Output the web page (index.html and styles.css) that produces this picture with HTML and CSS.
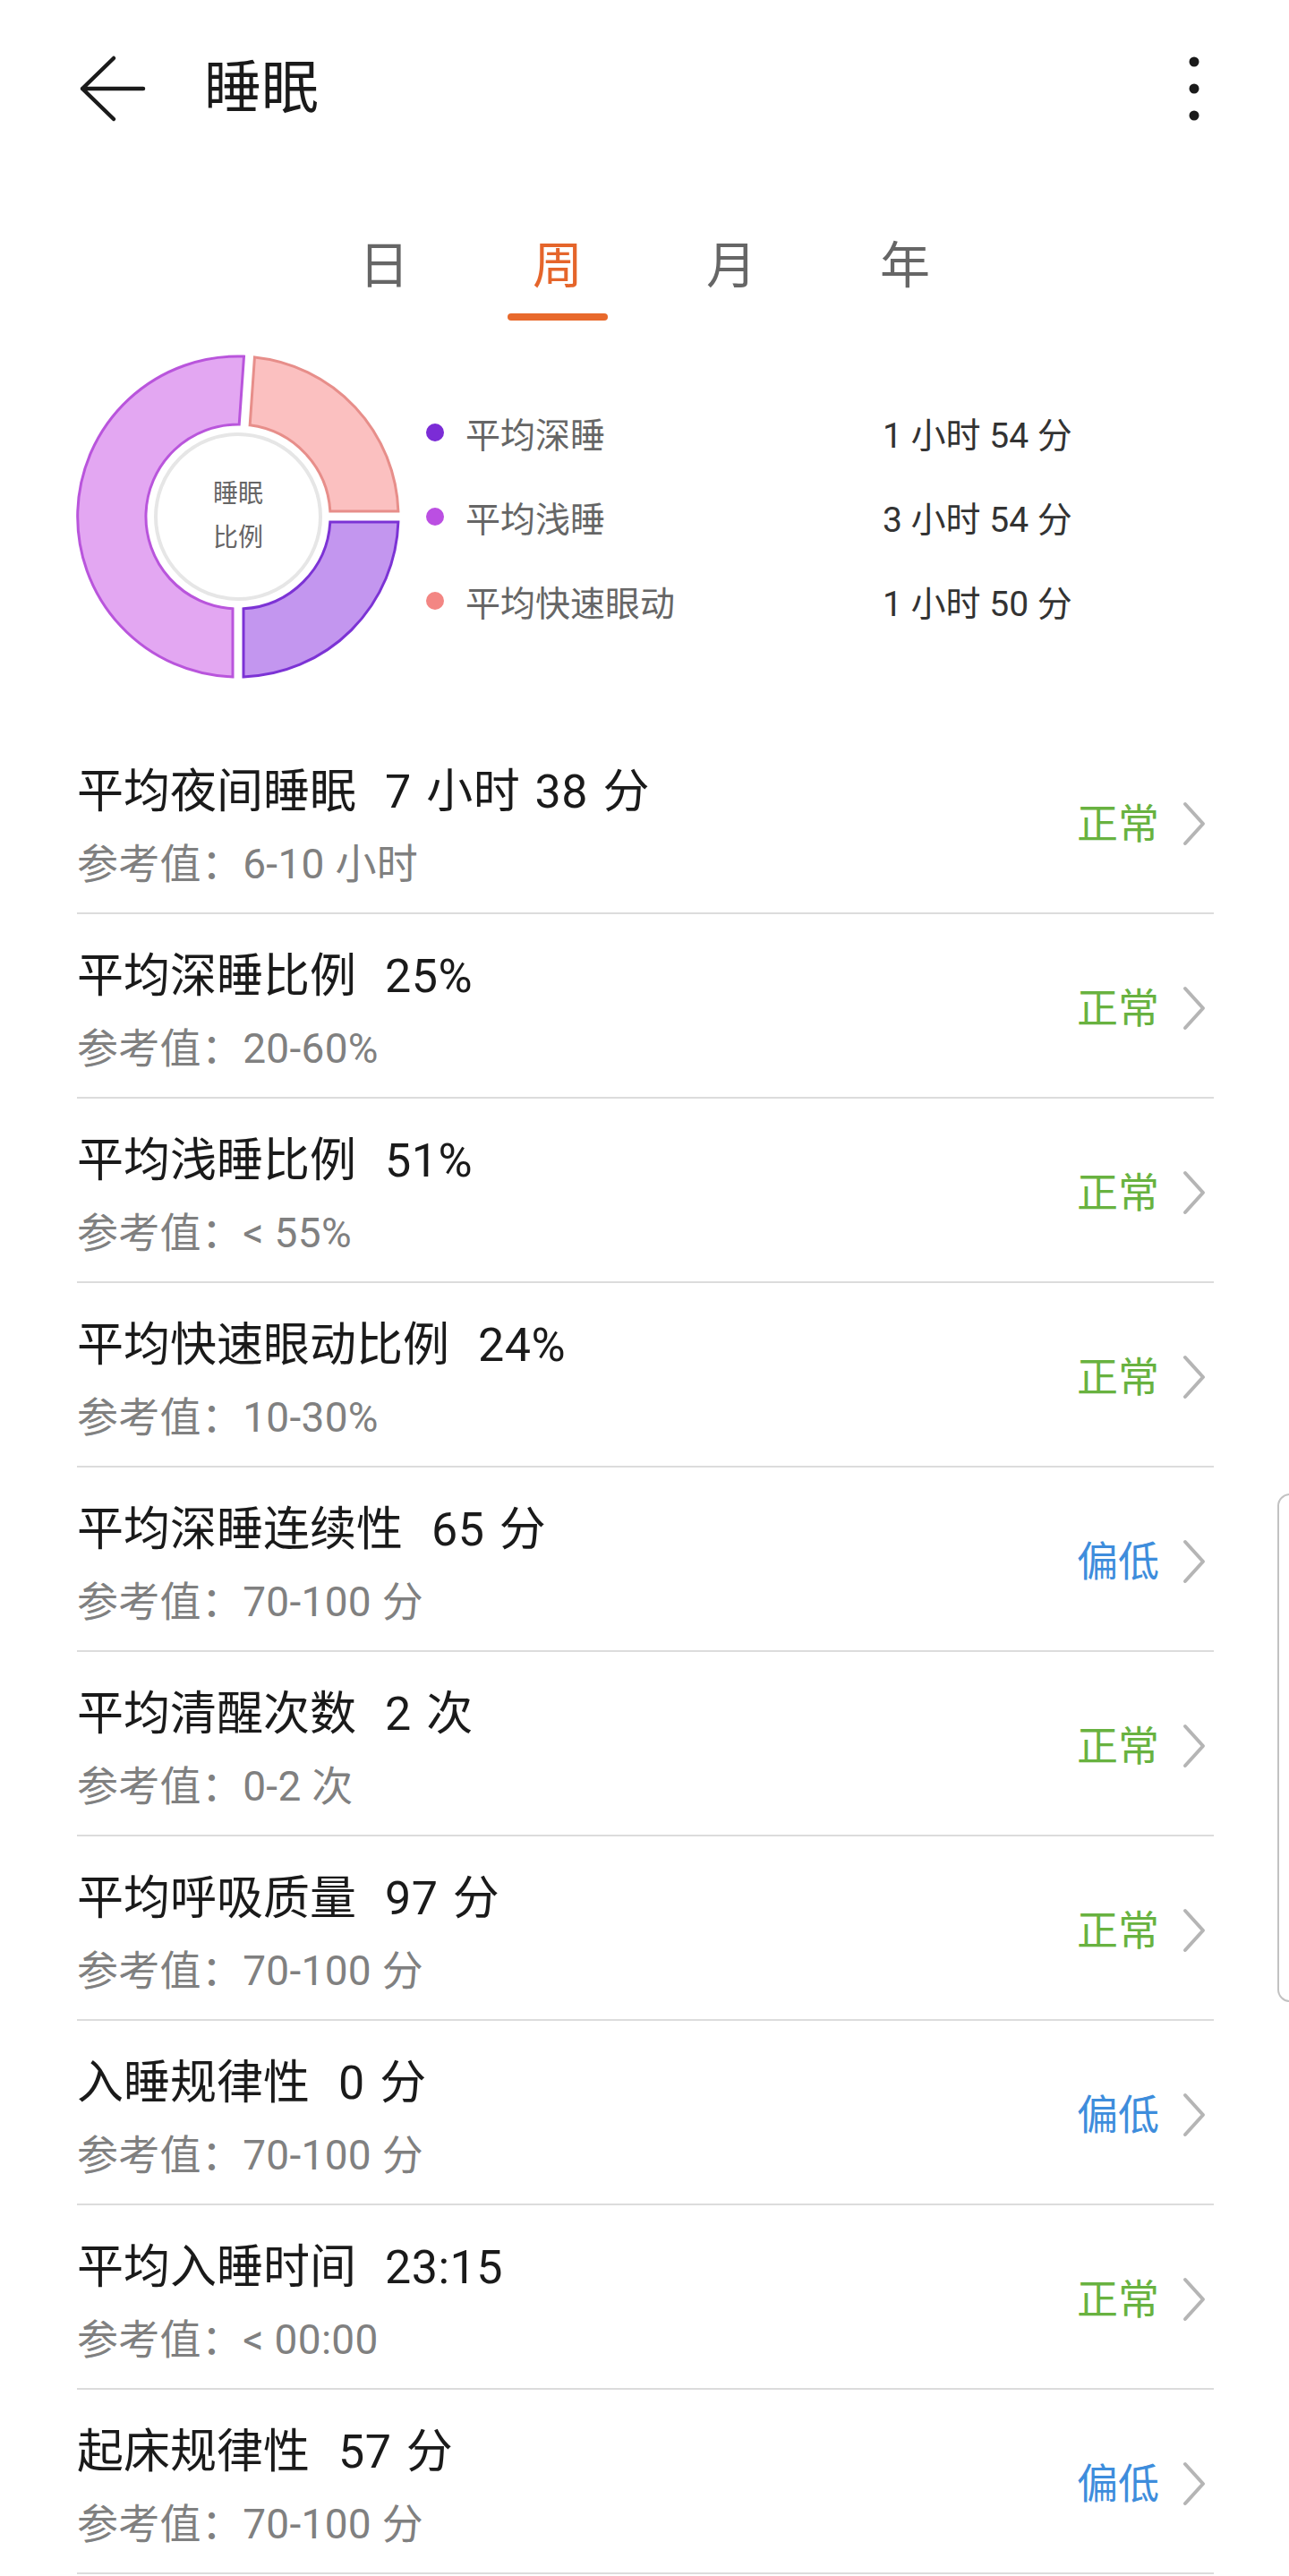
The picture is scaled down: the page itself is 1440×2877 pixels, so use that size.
FILE: index.html
```html
<!DOCTYPE html>
<html lang="zh-CN">
<head>
	<meta charset="UTF-8">
	<title>睡眠</title>
	<link rel="stylesheet" href="styles.css">
</head>
<body>
	<div class="page">
		<div class="header">
			<svg class="back" width="76" height="76" viewBox="0 0 76 76"><path d="M72 38H4M39 4L4 38L39 72" fill="none" stroke="#1a1a1a" stroke-width="4.5" stroke-linecap="round" stroke-linejoin="round"/></svg>
			<h1 class="title">睡眠</h1>
			<svg class="more" width="20" height="80" viewBox="0 0 20 80"><circle cx="10" cy="10" r="5.5" fill="#1a1a1a"/><circle cx="10" cy="40" r="5.5" fill="#1a1a1a"/><circle cx="10" cy="70" r="5.5" fill="#1a1a1a"/></svg>
		</div>
		<div class="tabs">
			<div class="tab">日</div>
			<div class="tab tab-on">周</div>
			<div class="tab">月</div>
			<div class="tab">年</div>
		</div>
		<div class="summary">
			<svg class="ring" width="370" height="370" viewBox="0 0 370 370">
				<path class="seg-rem" d="M203.46,6.95 A179,179 0 0 1 363.9,179 L287.83,179 A103,103 0 0 0 198.16,82.84 Z"/>
				<path class="seg-deep" d="M363.9,191 A179,179 0 0 1 191,363.9 L191,287.83 A103,103 0 0 0 287.83,191 Z"/>
				<path class="seg-light" d="M179,363.9 A179,179 0 1 1 191.5,6.12 L186.19,82.01 A103,103 0 0 0 179,287.83 Z"/>
				<circle cx="185" cy="185" r="92" fill="#fff" stroke="#e6e6e6" stroke-width="4"/>
				<text class="ring-txt" x="185" y="169">睡眠</text>
				<text class="ring-txt" x="185" y="218">比例</text>
			</svg>
			<ul class="legend">
				<li><span class="dot dot-deep"></span><span class="legend-name">平均深睡</span><span class="legend-val">1 小时 54 分</span></li>
				<li><span class="dot dot-light"></span><span class="legend-name">平均浅睡</span><span class="legend-val">3 小时 54 分</span></li>
				<li><span class="dot dot-rem"></span><span class="legend-name">平均快速眼动</span><span class="legend-val">1 小时 50 分</span></li>
			</ul>
		</div>
		<div class="list">
			<div class="item">
				<div class="item-text">
					<p class="item-title">平均夜间睡眠<span class="item-val">7 小时 38 分</span></p>
					<p class="item-ref">参考值<span class="colon">：</span>6-10 小时</p>
				</div>
				<span class="status status-ok">正常</span>
				<svg class="chevron" width="26" height="50" viewBox="0 0 26 50"><polyline points="3,3 23,25 3,47" fill="none" stroke="#b5b5b5" stroke-width="4" stroke-linecap="round" stroke-linejoin="round"/></svg>
			</div>
			<div class="item">
				<div class="item-text">
					<p class="item-title">平均深睡比例<span class="item-val">25%</span></p>
					<p class="item-ref">参考值<span class="colon">：</span>20-60%</p>
				</div>
				<span class="status status-ok">正常</span>
				<svg class="chevron" width="26" height="50" viewBox="0 0 26 50"><polyline points="3,3 23,25 3,47" fill="none" stroke="#b5b5b5" stroke-width="4" stroke-linecap="round" stroke-linejoin="round"/></svg>
			</div>
			<div class="item">
				<div class="item-text">
					<p class="item-title">平均浅睡比例<span class="item-val">51%</span></p>
					<p class="item-ref">参考值<span class="colon">：</span>&lt; 55%</p>
				</div>
				<span class="status status-ok">正常</span>
				<svg class="chevron" width="26" height="50" viewBox="0 0 26 50"><polyline points="3,3 23,25 3,47" fill="none" stroke="#b5b5b5" stroke-width="4" stroke-linecap="round" stroke-linejoin="round"/></svg>
			</div>
			<div class="item">
				<div class="item-text">
					<p class="item-title">平均快速眼动比例<span class="item-val">24%</span></p>
					<p class="item-ref">参考值<span class="colon">：</span>10-30%</p>
				</div>
				<span class="status status-ok">正常</span>
				<svg class="chevron" width="26" height="50" viewBox="0 0 26 50"><polyline points="3,3 23,25 3,47" fill="none" stroke="#b5b5b5" stroke-width="4" stroke-linecap="round" stroke-linejoin="round"/></svg>
			</div>
			<div class="item">
				<div class="item-text">
					<p class="item-title">平均深睡连续性<span class="item-val">65 分</span></p>
					<p class="item-ref">参考值<span class="colon">：</span>70-100 分</p>
				</div>
				<span class="status status-low">偏低</span>
				<svg class="chevron" width="26" height="50" viewBox="0 0 26 50"><polyline points="3,3 23,25 3,47" fill="none" stroke="#b5b5b5" stroke-width="4" stroke-linecap="round" stroke-linejoin="round"/></svg>
			</div>
			<div class="item">
				<div class="item-text">
					<p class="item-title">平均清醒次数<span class="item-val">2 次</span></p>
					<p class="item-ref">参考值<span class="colon">：</span>0-2 次</p>
				</div>
				<span class="status status-ok">正常</span>
				<svg class="chevron" width="26" height="50" viewBox="0 0 26 50"><polyline points="3,3 23,25 3,47" fill="none" stroke="#b5b5b5" stroke-width="4" stroke-linecap="round" stroke-linejoin="round"/></svg>
			</div>
			<div class="item">
				<div class="item-text">
					<p class="item-title">平均呼吸质量<span class="item-val">97 分</span></p>
					<p class="item-ref">参考值<span class="colon">：</span>70-100 分</p>
				</div>
				<span class="status status-ok">正常</span>
				<svg class="chevron" width="26" height="50" viewBox="0 0 26 50"><polyline points="3,3 23,25 3,47" fill="none" stroke="#b5b5b5" stroke-width="4" stroke-linecap="round" stroke-linejoin="round"/></svg>
			</div>
			<div class="item">
				<div class="item-text">
					<p class="item-title">入睡规律性<span class="item-val">0 分</span></p>
					<p class="item-ref">参考值<span class="colon">：</span>70-100 分</p>
				</div>
				<span class="status status-low">偏低</span>
				<svg class="chevron" width="26" height="50" viewBox="0 0 26 50"><polyline points="3,3 23,25 3,47" fill="none" stroke="#b5b5b5" stroke-width="4" stroke-linecap="round" stroke-linejoin="round"/></svg>
			</div>
			<div class="item">
				<div class="item-text">
					<p class="item-title">平均入睡时间<span class="item-val">23:15</span></p>
					<p class="item-ref">参考值<span class="colon">：</span>&lt; 00:00</p>
				</div>
				<span class="status status-ok">正常</span>
				<svg class="chevron" width="26" height="50" viewBox="0 0 26 50"><polyline points="3,3 23,25 3,47" fill="none" stroke="#b5b5b5" stroke-width="4" stroke-linecap="round" stroke-linejoin="round"/></svg>
			</div>
			<div class="item">
				<div class="item-text">
					<p class="item-title">起床规律性<span class="item-val">57 分</span></p>
					<p class="item-ref">参考值<span class="colon">：</span>70-100 分</p>
				</div>
				<span class="status status-low">偏低</span>
				<svg class="chevron" width="26" height="50" viewBox="0 0 26 50"><polyline points="3,3 23,25 3,47" fill="none" stroke="#b5b5b5" stroke-width="4" stroke-linecap="round" stroke-linejoin="round"/></svg>
			</div>
		</div>
		<div class="edge"></div>
	</div>
</body>
</html>
```

FILE: styles.css
```css
*{margin: 0;padding: 0;box-sizing: border-box;}
body{
	background-color: #fff;
	font-family: Roboto, "Noto Sans CJK SC", sans-serif;
	color: #1a1a1a;
}
.page{
	position: relative;
	width: 1440px;
	height: 2877px;
	overflow: hidden;
}
/*顶部栏*/
.header{
	display: flex;
	align-items: center;
	height: 198px;
	padding-left: 88px;
}
.header .title{
	margin-left: 64px;
	font-size: 64px;
	font-weight: 400;
	line-height: 80px;
}
.header .more{
	margin-left: auto;
	margin-right: 96px;
}
/*日周月年*/
.tabs{
	display: flex;
	justify-content: center;
	align-items: flex-start;
	padding-top: 64px;
}
.tab{
	display: flex;
	flex-direction: column;
	align-items: center;
	width: 194px;
	font-size: 56px;
	line-height: 70px;
	color: #666;
}
.tab-on{
	color: #e5652b;
}
.tab-on::after{
	content: "";
	width: 112px;
	height: 8px;
	margin-top: 18px;
	border-radius: 4px;
	background-color: #e8692c;
}
/*睡眠比例*/
.summary{
	display: flex;
	align-items: center;
	margin-top: 34px;
	padding-left: 81px;
}
.ring .seg-rem{fill: #fbc0c0;stroke: #e78e8a;stroke-width: 3;}
.ring .seg-deep{fill: #c396ef;stroke: #7c33d5;stroke-width: 3;}
.ring .seg-light{fill: #e3a7f2;stroke: #b955dc;stroke-width: 3;}
.ring-txt{
	font-size: 28px;
	fill: #666;
	text-anchor: middle;
	font-family: "Noto Sans CJK SC", sans-serif;
}
.legend{
	list-style: none;
	margin-left: 25px;
}
.legend li{
	display: flex;
	align-items: center;
	height: 94px;
	font-size: 39px;
}
.dot{
	width: 20px;
	height: 20px;
	border-radius: 50%;
	margin-right: 24px;
}
.dot-deep{background-color: #7b2cd6;}
.dot-light{background-color: #bb4fe2;}
.dot-rem{background-color: #f38683;}
.legend-name{
	width: 466px;
	color: #666;
}
.legend-val{
	color: #333;
}
/*指标列表*/
.list{
	margin: 53px 84px 0 86px;
}
.item{
	display: flex;
	align-items: center;
	height: 206px;
	padding-top: 6px;
	padding-right: 9px;
	border-bottom: 2px solid #dcdcdc;
}
.item-text{
	flex: 1;
	padding-top: 6px;
}
.item-title{
	font-size: 52px;
	line-height: 80px;
	color: #1a1a1a;
}
.item-val{
	margin-left: 32px;
	word-spacing: 3px;
	letter-spacing: 0.5px;
}
.item-ref{
	font-size: 46px;
	line-height: 72px;
	color: #808080;
	letter-spacing: 0.3px;
}
.item-ref .colon{
	font-family: "Noto Sans CJK JP", sans-serif;
}
.status{
	font-size: 46px;
	line-height: 60px;
	margin-right: 26px;
}
.status-ok{color: #68b240;}
.status-low{color: #3e8ddc;}
/*右侧边缘把手*/
.edge{
	position: absolute;
	left: 1427px;
	top: 1668px;
	width: 30px;
	height: 568px;
	border: 2px solid #c2c2c2;
	border-radius: 14px;
	background-color: #fff;
}
```
